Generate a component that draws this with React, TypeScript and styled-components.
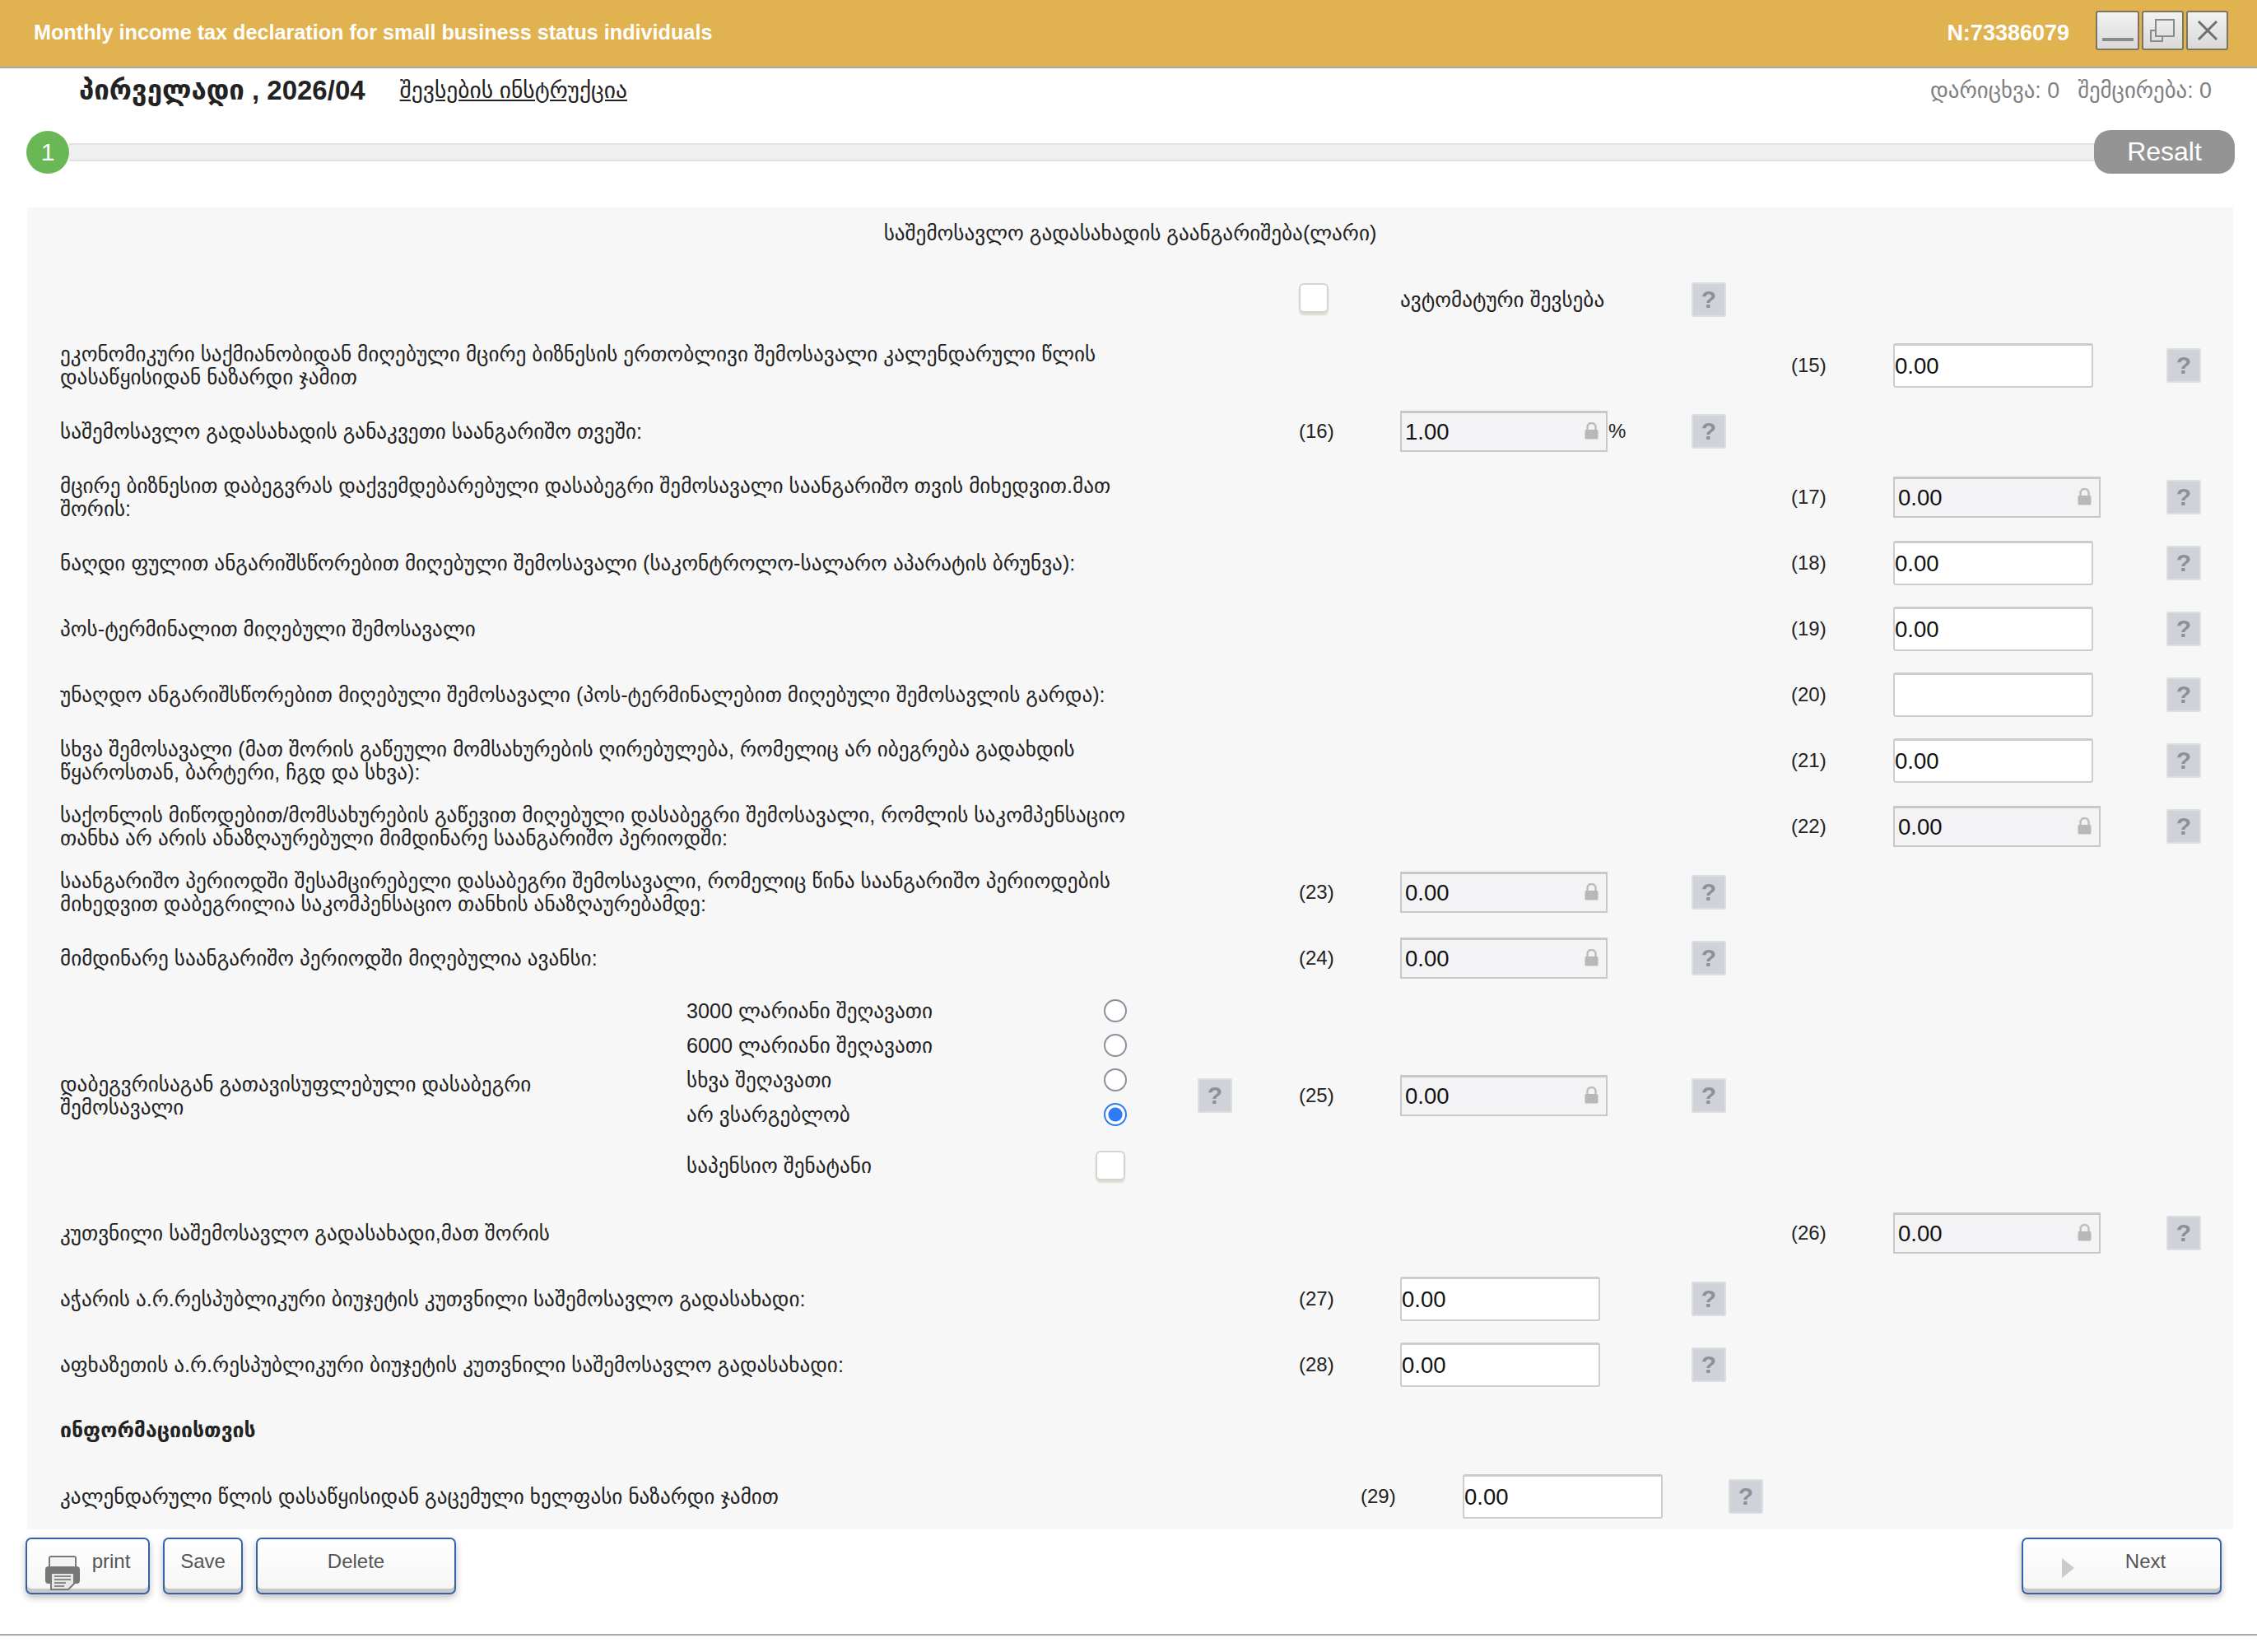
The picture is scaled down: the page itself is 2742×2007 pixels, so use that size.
import React from 'react';
import styled, { createGlobalStyle } from 'styled-components';

const GlobalStyle = createGlobalStyle`
    html, body {
        margin: 0;
        padding: 0;
        background: #fff;
        color: #222;
        font-family: 'Liberation Sans', 'DejaVu Sans', sans-serif;
    }
`;

const Page = styled.div`
    width: 2742px;
    height: 2007px;
    display: flex;
    flex-direction: column;
    overflow: hidden;
`;

const TitleBar = styled.header`
    height: 81px;
    flex: none;
    background: #e0b250;
    border-bottom: 2px solid #a9a9a9;
    display: flex;
    align-items: center;
    padding: 0 35px 0 41px;
`;

const WindowTitle = styled.h1`
    margin: 0 0 2px;
    flex: 1;
    font-size: 25.2px;
    font-weight: 700;
    color: #fff;
`;

const DocNumber = styled.span`
    font-size: 27px;
    font-weight: 700;
    color: #fff;
    margin-right: 32px;
`;

const WindowButtons = styled.div`
    display: flex;
    gap: 3px;
    margin-bottom: 8px;
`;

const WindowButton = styled.button<{ $wide?: boolean }>`
    width: ${(p) => (p.$wide ? 53 : 51)}px;
    height: 48px;
    padding: 0;
    border: 2px solid #7d7560;
    border-radius: 3px;
    background: linear-gradient(#f2f2f2, #d9d9d9);
    display: flex;
    align-items: center;
    justify-content: center;
`;

const SubHeader = styled.div`
    height: 53px;
    padding: 0 55px 0 96px;
    display: flex;
    align-items: center;
`;

const Period = styled.h2`
    margin: 0 42px 0 0;
    font-size: 33px;
    font-weight: 700;
    color: #222;
`;

const InstructionLink = styled.a`
    flex: 1;
    font-size: 27.5px;
    color: #222;
    text-decoration: underline;
`;

const Stat = styled.span`
    font-size: 26.8px;
    color: #808080;
    margin-left: 22px;
`;

const Stepper = styled.div`
    height: 53px;
    margin: 22px 27px 41px 32px;
    display: flex;
    align-items: center;
`;

const StepCircle = styled.div`
    width: 52px;
    height: 52px;
    flex: none;
    border-radius: 50%;
    background: #6ab855;
    color: #fff;
    font-size: 30px;
    display: flex;
    align-items: center;
    justify-content: center;
`;

const StepTrack = styled.div`
    flex: 1;
    height: 22px;
    box-sizing: border-box;
    background: #efefef;
    border-top: 2px solid #e2e2e2;
    border-bottom: 2px solid #e2e2e2;
`;

const ResultButton = styled.div`
    width: 171px;
    height: 53px;
    flex: none;
    border-radius: 20px;
    background: #949494;
    color: #fff;
    font-size: 32px;
    display: flex;
    align-items: center;
    justify-content: center;
`;

const Panel = styled.section`
    margin: 0 29px 0 33px;
    background: #f7f7f7;
    height: 1606px;
`;

const PanelTitle = styled.div`
    height: 62px;
    padding-bottom: 10px;
    display: flex;
    align-items: center;
    justify-content: center;
    font-size: 25.2px;
`;

const Row = styled.div<{ $height?: number }>`
    height: ${(p) => p.$height ?? 80}px;
    padding-left: 40px;
    display: grid;
    grid-template-columns: 1505px 123px 354px 121px 124px 332px 42px;
    align-items: center;
`;

const ShiftedRow = styled(Row)`
    grid-template-columns: 1580px 124px 323px 42px;
`;

const Label = styled.div`
    white-space: pre;
    line-height: 28px;
    font-size: 25.2px;
`;

const WideLabel = styled(Label)<{ $right?: boolean }>`
    grid-column: ${(p) => (p.$right ? '1 / 5' : '1')};
`;

const Section = styled(Label)`
    font-size: 24.8px;
    font-weight: 700;
`;

const Code = styled.div<{ $right?: boolean }>`
    grid-column: ${(p) => (p.$right ? 5 : 2)};
    font-size: 24px;
`;

const Field = styled.div<{ $right?: boolean }>`
    grid-column: ${(p) => (p.$right ? 6 : 3)};
    display: flex;
    align-items: center;
    justify-self: start;
`;

const LockBox = styled.div`
    position: relative;
    width: 252px;
    height: 50px;
`;

const NumberInput = styled.input`
    display: block;
    width: 243px;
    height: 54px;
    box-sizing: border-box;
    padding: 0;
    font: 27.5px 'Liberation Sans', sans-serif;
    color: #111;
    background: #fff;
    border: 2px solid #cdcdcd;
    border-top-width: 3px;
    border-radius: 3px;
    outline: none;
`;

const LockedInput = styled.input`
    display: block;
    width: 100%;
    height: 100%;
    box-sizing: border-box;
    padding: 0 36px 0 4px;
    font: 27.5px 'Liberation Sans', sans-serif;
    color: #111;
    background: #f3f3f5;
    border: 2px solid #c8c8c8;
    border-top-width: 3px;
    outline: none;
`;

const LockMark = styled.svg`
    position: absolute;
    top: 14px;
    right: 11px;
`;

const Suffix = styled.span`
    font-size: 24px;
    margin-left: 1px;
`;

const HelpBox = styled.div<{ $right?: boolean }>`
    grid-column: ${(p) => (p.$right ? 7 : 4)};
    width: 42px;
    height: 42px;
    box-sizing: border-box;
    background: #cfd2d8;
    border: 2px solid #dcdee2;
    border-radius: 2px;
    color: #8d9096;
    font-size: 30px;
    font-weight: 700;
    display: flex;
    align-items: center;
    justify-content: center;
`;

const CheckBox = styled.input`
    appearance: none;
    width: 36px;
    height: 36px;
    margin: 0 2px 0 0;
    background: #fff;
    border: 2px solid #d4d4d4;
    border-radius: 6px;
    box-shadow: 0 3px 2px #dcdcd0;
`;

const AutoFillCheck = styled(CheckBox)`
    grid-column: 2;
    margin: 0 0 4px;
`;

const AutoFill = styled.div`
    grid-column: 3;
    font-size: 25.2px;
`;

const ExemptCell = styled.div`
    display: flex;
    align-items: center;
`;

const ExemptLabel = styled(Label)`
    width: 761px;
`;

const OptionList = styled.div`
    width: 535px;
    padding-bottom: 18px;
    display: flex;
    flex-direction: column;
`;

const Option = styled.label<{ $gap?: number }>`
    height: 42px;
    margin-top: ${(p) => p.$gap ?? 0}px;
    display: flex;
    align-items: center;
    justify-content: space-between;
    font-size: 25.2px;
`;

const Radio = styled.input`
    appearance: none;
    width: 28px;
    height: 28px;
    margin: 0;
    box-sizing: border-box;
    background: #fff;
    border: 2px solid #8f8f9d;
    border-radius: 50%;

    &:checked {
        border-color: #2f7bf5;
        background: radial-gradient(circle, #2f7bf5 0 8px, #fff 9px);
    }
`;

const ExemptHelp = styled(HelpBox)`
    margin-left: 86px;
`;

const Footer = styled.footer`
    margin: 10px 43px 0 31px;
    display: flex;
    gap: 16px;
`;

const ActionButton = styled.button<{ $width: number }>`
    width: ${(p) => p.$width}px;
    height: 69px;
    box-sizing: border-box;
    padding: 0 0 12px;
    border: 2px solid #3563a5;
    border-radius: 7px;
    background: linear-gradient(#fff, #f5f5f5);
    box-shadow: inset 0 -5px 0 #c8c8c8, 0 4px 8px rgba(0, 0, 0, 0.25);
    color: #555;
    font: 24px 'Liberation Sans', sans-serif;
    display: flex;
    align-items: center;
    justify-content: center;
    gap: 15px;
`;

const NextButton = styled(ActionButton)`
    margin-left: auto;
    padding-left: 58px;
    position: relative;
`;

const PrintMark = styled.svg`
    margin: 16px 0 -12px 0;
`;

const NextArrow = styled.svg`
    position: absolute;
    left: 47px;
    top: 23px;
`;

const BottomRule = styled.div`
    margin-top: 48px;
    height: 2px;
    background: #a9a9a9;
`;

type Entry = {
    label: string;
    code: number;
    right?: boolean;
    locked?: boolean;
    value?: string;
    suffix?: string;
};

const upperRows: Entry[] = [
    {
        label: 'ეკონომიკური საქმიანობიდან მიღებული მცირე ბიზნესის ერთობლივი შემოსავალი კალენდარული წლის\nდასაწყისიდან ნაზარდი ჯამით',
        code: 15,
        right: true,
    },
    { label: 'საშემოსავლო გადასახადის განაკვეთი საანგარიშო თვეში:', code: 16, locked: true, value: '1.00', suffix: '%' },
    {
        label: 'მცირე ბიზნესით დაბეგვრას დაქვემდებარებული დასაბეგრი შემოსავალი საანგარიშო თვის მიხედვით.მათ\nშორის:',
        code: 17,
        right: true,
        locked: true,
    },
    { label: 'ნაღდი ფულით ანგარიშსწორებით მიღებული შემოსავალი (საკონტროლო-სალარო აპარატის ბრუნვა):', code: 18, right: true },
    { label: 'პოს-ტერმინალით მიღებული შემოსავალი', code: 19, right: true },
    {
        label: 'უნაღდო ანგარიშსწორებით მიღებული შემოსავალი (პოს-ტერმინალებით მიღებული შემოსავლის გარდა):',
        code: 20,
        right: true,
        value: '',
    },
    {
        label: 'სხვა შემოსავალი (მათ შორის გაწეული მომსახურების ღირებულება, რომელიც არ იბეგრება გადახდის\nწყაროსთან, ბარტერი, ჩგდ და სხვა):',
        code: 21,
        right: true,
    },
    {
        label: 'საქონლის მიწოდებით/მომსახურების გაწევით მიღებული დასაბეგრი შემოსავალი, რომლის საკომპენსაციო\nთანხა არ არის ანაზღაურებული მიმდინარე საანგარიშო პერიოდში:',
        code: 22,
        right: true,
        locked: true,
    },
    {
        label: 'საანგარიშო პერიოდში შესამცირებელი დასაბეგრი შემოსავალი, რომელიც წინა საანგარიშო პერიოდების\nმიხედვით დაბეგრილია საკომპენსაციო თანხის ანაზღაურებამდე:',
        code: 23,
        locked: true,
    },
    { label: 'მიმდინარე საანგარიშო პერიოდში მიღებულია ავანსი:', code: 24, locked: true },
];

const lowerRows: Entry[] = [
    { label: 'კუთვნილი საშემოსავლო გადასახადი,მათ შორის', code: 26, right: true, locked: true },
    { label: 'აჭარის ა.რ.რესპუბლიკური ბიუჯეტის კუთვნილი საშემოსავლო გადასახადი:', code: 27 },
    { label: 'აფხაზეთის ა.რ.რესპუბლიკური ბიუჯეტის კუთვნილი საშემოსავლო გადასახადი:', code: 28 },
];

const reliefOptions = ['3000 ლარიანი შეღავათი', '6000 ლარიანი შეღავათი', 'სხვა შეღავათი', 'არ ვსარგებლობ'];

const Lock: React.FC = () => (
    <LockMark width="17" height="21" viewBox="0 0 17 21">
        <path d="M3.5 10V6a5 5 0 0 1 10 0v4" fill="none" stroke="#bdbdbd" strokeWidth="2.4" />
        <rect x="0.5" y="9" width="16" height="11.5" rx="1.5" fill="#b8b8b8" />
    </LockMark>
);

const LockedField: React.FC<{ value: string }> = ({ value }) => (
    <LockBox>
        <LockedInput readOnly value={value} />
        <Lock />
    </LockBox>
);

const EntryRow: React.FC<{ entry: Entry }> = ({ entry }) => {
    const value = entry.value ?? '0.00';
    return (
        <Row>
            <WideLabel $right={entry.right}>{entry.label}</WideLabel>
            <Code $right={entry.right}>({entry.code})</Code>
            <Field $right={entry.right}>
                {entry.locked ? <LockedField value={value} /> : <NumberInput readOnly value={value} />}
                {entry.suffix && <Suffix>{entry.suffix}</Suffix>}
            </Field>
            <HelpBox $right={entry.right}>?</HelpBox>
        </Row>
    );
};

export default function App() {
    return (
        <Page>
            <GlobalStyle />
            <TitleBar>
                <WindowTitle>Monthly income tax declaration for small business status individuals</WindowTitle>
                <DocNumber>N:73386079</DocNumber>
                <WindowButtons>
                    <WindowButton $wide>
                        <svg width="40" height="30" viewBox="0 0 40 30">
                            <rect x="1" y="24" width="38" height="4" fill="#8a8a8a" />
                        </svg>
                    </WindowButton>
                    <WindowButton>
                        <svg width="34" height="30" viewBox="0 0 34 30" fill="none" stroke="#8a8a8a" strokeWidth="2">
                            <rect x="8" y="2" width="22" height="20" />
                            <path d="M8 15H2v13h14v-6" />
                        </svg>
                    </WindowButton>
                    <WindowButton>
                        <svg width="26" height="26" viewBox="0 0 26 26" stroke="#6f6f6f" strokeWidth="3">
                            <path d="M2 2l22 22M24 2L2 24" />
                        </svg>
                    </WindowButton>
                </WindowButtons>
            </TitleBar>

            <SubHeader>
                <Period>პირველადი , 2026/04</Period>
                <InstructionLink>შევსების ინსტრუქცია</InstructionLink>
                <Stat>დარიცხვა: 0</Stat>
                <Stat>შემცირება: 0</Stat>
            </SubHeader>

            <Stepper>
                <StepCircle>1</StepCircle>
                <StepTrack />
                <ResultButton>Resalt</ResultButton>
            </Stepper>

            <Panel>
                <PanelTitle>საშემოსავლო გადასახადის გაანგარიშება(ლარი)</PanelTitle>
                <Row>
                    <AutoFillCheck type="checkbox" />
                    <AutoFill>ავტომატური შევსება</AutoFill>
                    <HelpBox>?</HelpBox>
                </Row>
                {upperRows.map((entry) => (
                    <EntryRow key={entry.code} entry={entry} />
                ))}
                <Row $height={254}>
                    <ExemptCell>
                        <ExemptLabel>{'დაბეგვრისაგან გათავისუფლებული დასაბეგრი\nშემოსავალი'}</ExemptLabel>
                        <OptionList>
                            {reliefOptions.map((option, i) => (
                                <Option key={option}>
                                    {option}
                                    <Radio type="radio" name="relief" readOnly checked={i === 3} />
                                </Option>
                            ))}
                            <Option $gap={20}>
                                საპენსიო შენატანი
                                <CheckBox type="checkbox" />
                            </Option>
                        </OptionList>
                        <ExemptHelp>?</ExemptHelp>
                    </ExemptCell>
                    <Code>(25)</Code>
                    <Field>
                        <LockedField value="0.00" />
                    </Field>
                    <HelpBox>?</HelpBox>
                </Row>
                {lowerRows.map((entry) => (
                    <EntryRow key={entry.code} entry={entry} />
                ))}
                <Row>
                    <Section>ინფორმაციისთვის</Section>
                </Row>
                <ShiftedRow>
                    <Label>კალენდარული წლის დასაწყისიდან გაცემული ხელფასი ნაზარდი ჯამით</Label>
                    <Code>(29)</Code>
                    <Field>
                        <NumberInput readOnly value="0.00" />
                    </Field>
                    <HelpBox>?</HelpBox>
                </ShiftedRow>
            </Panel>

            <Footer>
                <ActionButton $width={151}>
                    <PrintMark width="42" height="42" viewBox="0 0 42 42">
                        <rect x="5" y="1" width="32" height="14" rx="2" fill="#f4f4f4" stroke="#7a7a7a" strokeWidth="2" />
                        <path d="M4 13h34a4 4 0 0 1 4 4v13a4 4 0 0 1-4 4H4a4 4 0 0 1-4-4V17a4 4 0 0 1 4-4z" fill="#777" />
                        <path d="M7 21h28v13l-7 7H7z" fill="#e8e8e8" stroke="#7a7a7a" strokeWidth="2" />
                        <path d="M11 25h20M11 29h20M11 33h14M11 37h12" stroke="#8a8a8a" strokeWidth="2" />
                    </PrintMark>
                    print
                </ActionButton>
                <ActionButton $width={97}>Save</ActionButton>
                <ActionButton $width={243}>Delete</ActionButton>
                <NextButton $width={243}>
                    <NextArrow width="15" height="24" viewBox="0 0 15 24">
                        <path d="M0 0l15 12L0 24z" fill="#cbcbcb" />
                    </NextArrow>
                    Next
                </NextButton>
            </Footer>
            <BottomRule />
        </Page>
    );
}
